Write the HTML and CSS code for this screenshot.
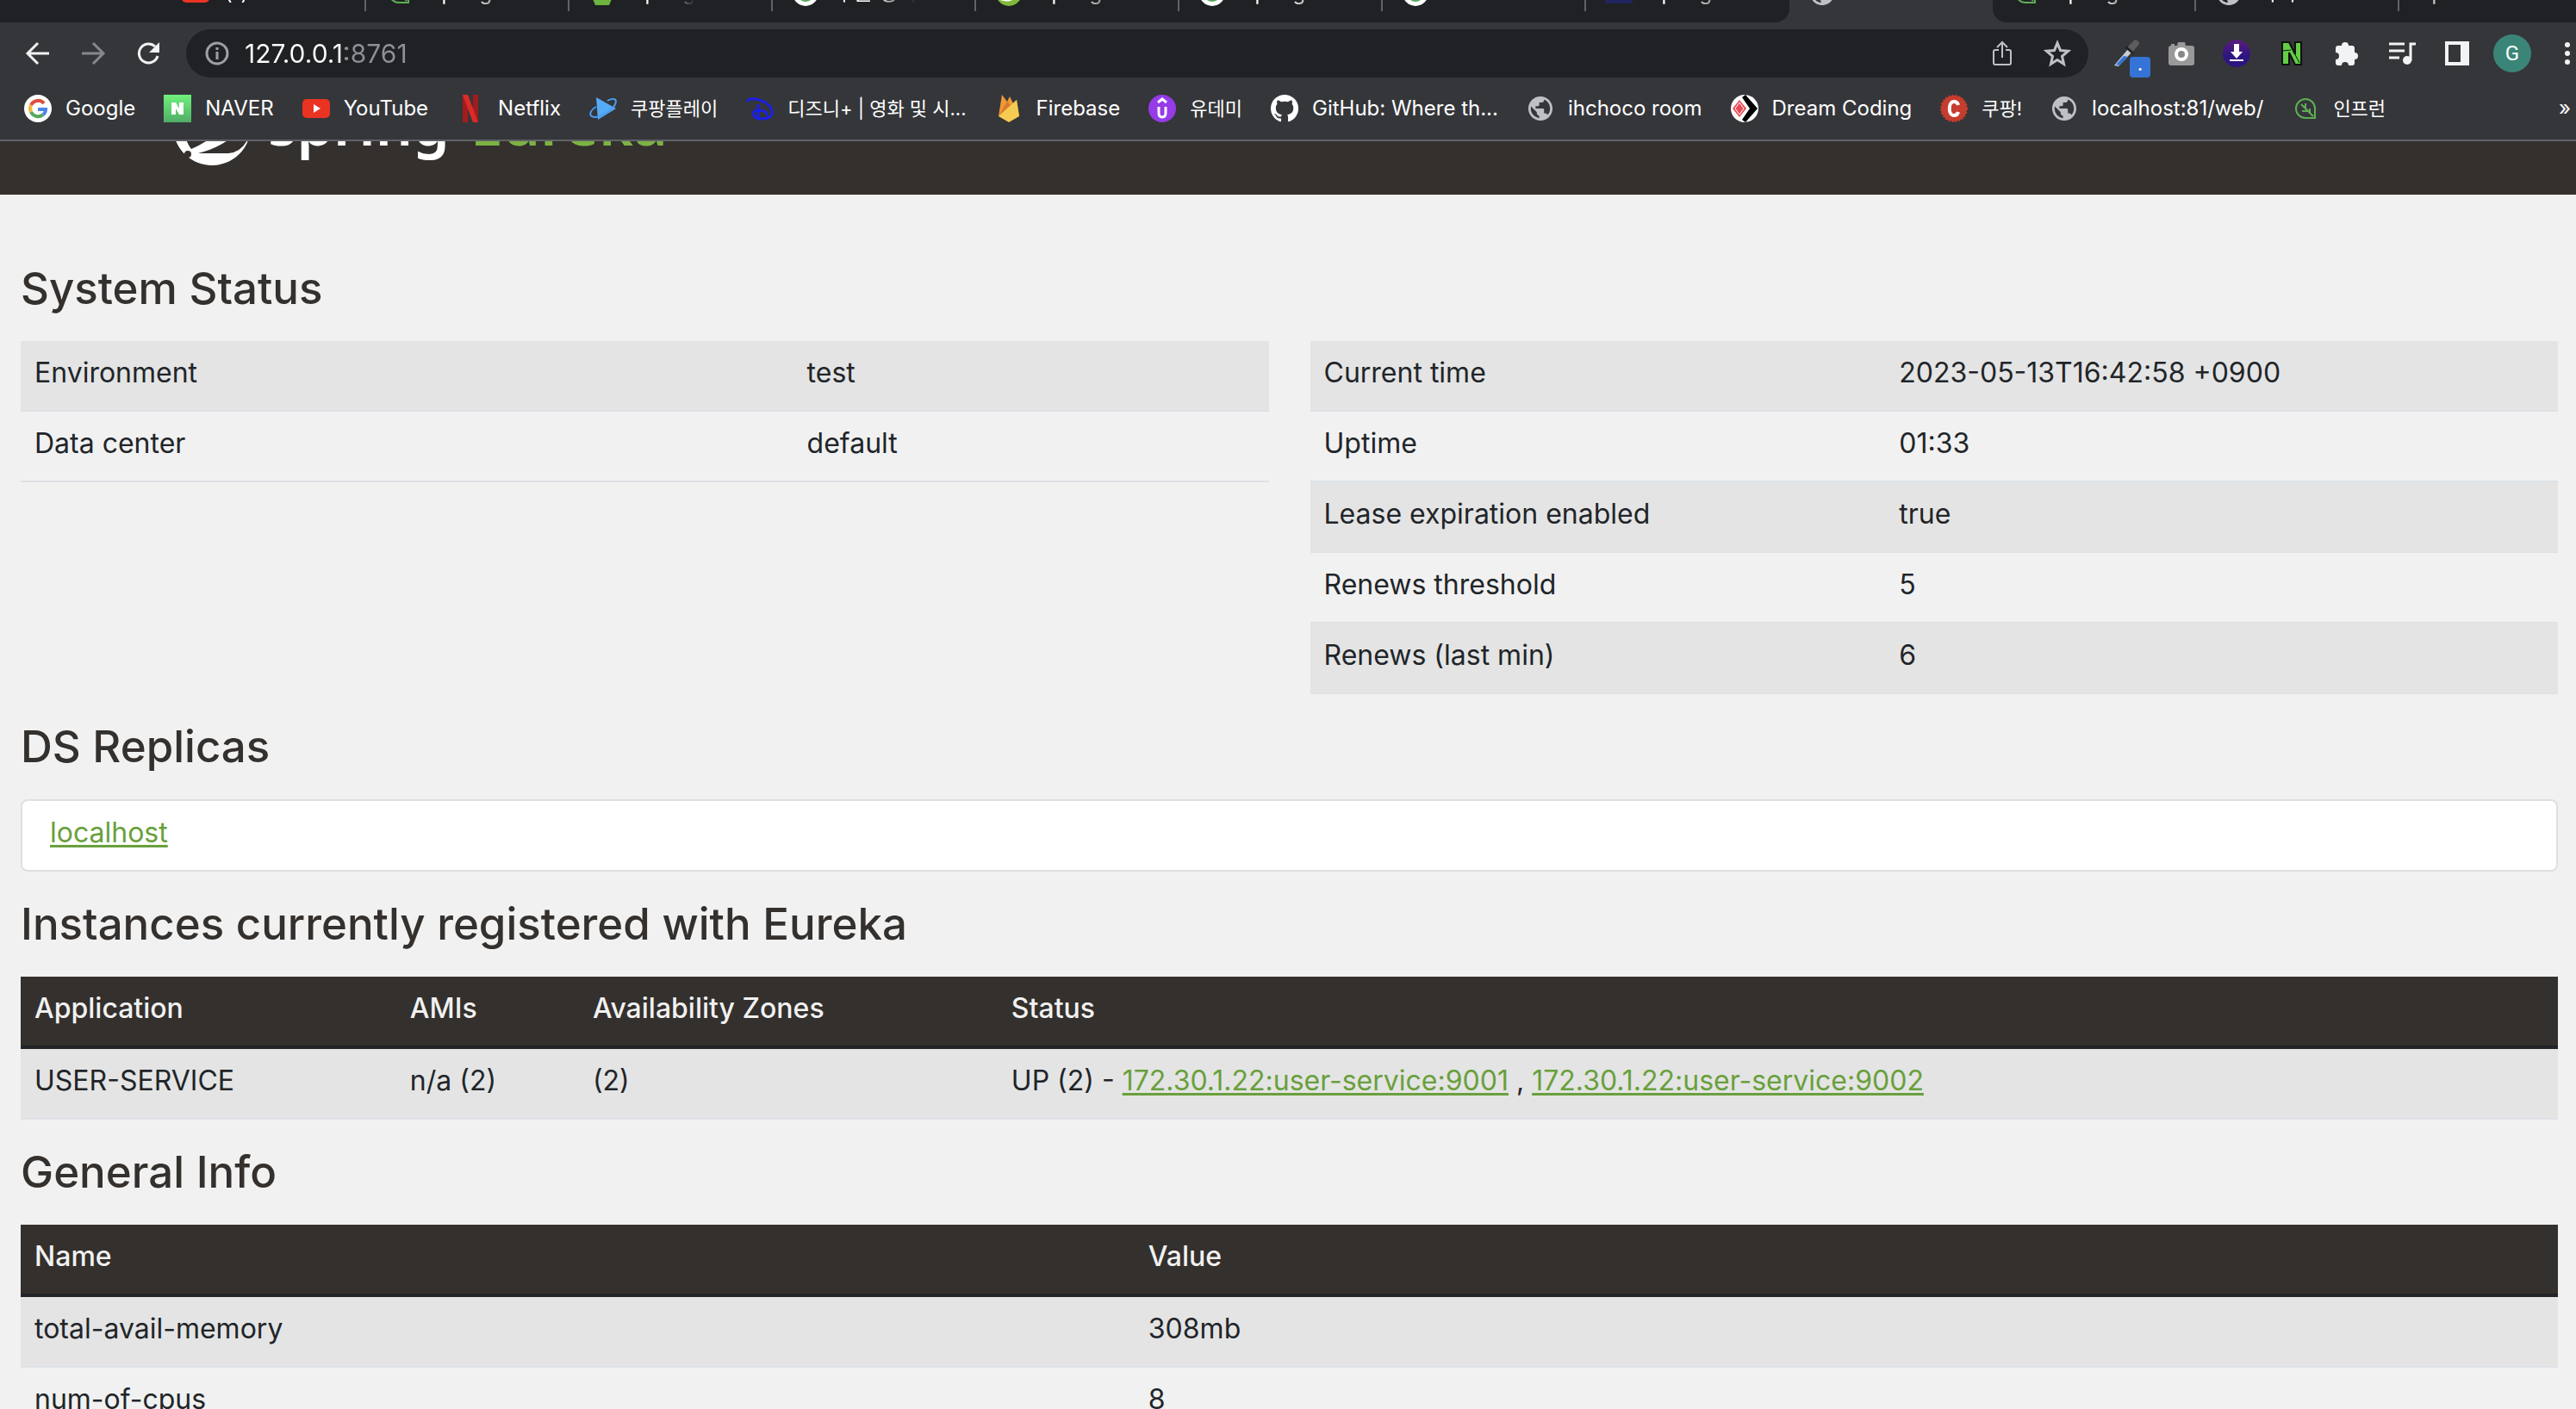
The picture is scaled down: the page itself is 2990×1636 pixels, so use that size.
FILE: index.html
```html
<!DOCTYPE html>
<html lang="en">
<head>
<meta charset="utf-8">
<title>Eureka</title>
<link rel="stylesheet" href="styles.css">
</head>
<body>
<svg class="defs" width="0" height="0" aria-hidden="true">
  <symbol id="globe" viewBox="0.6 0.6 22.8 22.8">
    <path fill="#bdc1c6" d="M12 2C6.480 2 2 6.480 2 12s4.480 10 10 10 10-4.480 10-10S17.520 2 12 2zm-1 17.930c-3.950-.49-7-3.850-7-7.930 0-.62.080-1.210.210-1.790L9 15v1c0 1.100.9 2 2 2v1.930zm6.900-2.540c-.26-.81-1-1.390-1.900-1.390h-1v-3c0-.55-.45-1-1-1H8v-2h2c.55 0 1-.45 1-1V7h2c1.100 0 2-.9 2-2v-.41c2.930 1.190 5 4.060 5 7.410 0 2.080-.8 3.970-2.100 5.390z"/>
  </symbol>
  <symbol id="leaf" viewBox="0 0 32 32">
    <path d="M27 27H16A11 11 0 1 1 27 16zM25 25 11 11M16 16V10M19 19h-7M21 21v-5" fill="none" stroke="#5fad56" stroke-width="2"/>
  </symbol>
  <symbol id="ring" viewBox="0 0 32 32">
    <circle cx="16" cy="16" r="15" fill="#fff"/><circle cx="16" cy="16" r="10" fill="#5aa85e"/>
  </symbol>
  <symbol id="youtube" viewBox="0 0 32 32">
    <rect y="5" width="32" height="22" rx="5" fill="#ea3323"/><path d="M13 11v10l8-5z" fill="#fff"/>
  </symbol>
</svg>

<div class="browser">
  <nav class="tabs" aria-label="Tabs">
    <span class="tabs-start"></span>
    <a class="tab" href="#"><svg class="icon"><use href="#youtube"/></svg><span class="tab-title">(1) 프로그</span></a>
    <a class="tab" href="#"><svg class="icon"><use href="#leaf"/></svg><span class="tab-title">Spring Cl</span></a>
    <a class="tab" href="#"><svg class="icon" viewBox="0 0 32 32"><path d="M8 2h16l6 14-6 14H8L2 16z" fill="#6db33f"/><path d="M8 22c10 4 16 0 16-12-4 6-16 2-16 12z" fill="#fff"/></svg><span class="tab-title">Spring</span></a>
    <a class="tab" href="#"><svg class="icon"><use href="#ring"/></svg><span class="tab-title">구글 영어</span></a>
    <a class="tab" href="#"><svg class="icon" viewBox="0 0 32 32"><circle cx="16" cy="16" r="15" fill="#80b93c"/><path d="M6 24c12 4 20 0 20-14-4 8-18 4-20 14z" fill="#fff"/></svg><span class="tab-title">Spring B</span></a>
    <a class="tab" href="#"><svg class="icon"><use href="#ring"/></svg><span class="tab-title">Spring bo</span></a>
    <a class="tab" href="#"><svg class="icon"><use href="#ring"/></svg><span class="tab-title">Eureka in</span></a>
    <a class="tab tab-before" href="#"><svg class="icon" viewBox="0 0 32 32"><rect y="4" width="32" height="24" fill="#20245c"/></svg><span class="tab-title">Spring C</span></a>
    <a class="tab tab-active" href="#"><svg class="icon"><use href="#globe"/></svg><span class="tab-title">Eureka</span></a>
    <a class="tab tab-after" href="#"><svg class="icon"><use href="#leaf"/></svg><span class="tab-title">Spring Cl</span></a>
    <a class="tab" href="#"><svg class="icon"><use href="#globe"/></svg><span class="tab-title">마이크로</span></a>
    <a class="tab tab-last" href="#"><span class="tab-title">Sp</span></a>
  </nav>

  <div class="toolbar">
    <button class="tool nav-tool" aria-label="Back"><svg class="icon" viewBox="0 0 32 32"><path d="M29 16H5M16 4 4 16l12 12" fill="none" stroke="#f1f3f4" stroke-width="3"/></svg></button>
    <button class="tool nav-tool" aria-label="Forward"><svg class="icon" viewBox="0 0 32 32"><path d="M3 16h24M16 4l12 12-12 12" fill="none" stroke="#86878a" stroke-width="3"/></svg></button>
    <button class="tool nav-tool" aria-label="Reload"><svg class="icon" viewBox="0 0 32 32"><path d="M27 19a11 11 0 1 1-3-11" fill="none" stroke="#f1f3f4" stroke-width="3"/><path d="M29 3v12H17z" fill="#f1f3f4"/></svg></button>
    <div class="omnibox">
      <svg class="icon" viewBox="0 0 32 32" fill="none" stroke="#9aa0a6" stroke-width="3"><circle cx="16" cy="16" r="12"/><path d="M16 14v9M16 9v3"/></svg>
      <input class="address" type="text" aria-label="Address" value="127.0.0.1:8761">
      <button class="tool" aria-label="Share"><svg class="icon" viewBox="0 0 32 32" fill="none" stroke="#bdc1c6" stroke-width="2"><path d="M12 12H8q-2 0-2 2v13q0 2 2 2h16q2 0 2-2V14q0-2-2-2h-4M16 21V4M10 9l6-6 6 6"/></svg></button>
      <button class="tool" aria-label="Bookmark this tab"><svg class="icon" viewBox="0 0 32 32" fill="none" stroke="#bdc1c6" stroke-width="3"><path d="m16 4 3.500 8.500 9 .8-7 6 2 9-7.500-4.800-7.500 4.800 2-9-7-6 9-.8z"/></svg></button>
    </div>
    <div class="extensions">
      <button class="tool picker" aria-label="Color picker"><svg class="icon" viewBox="0 0 32 32"><path d="M2 30 18 11l4 4L7 31z" fill="#c3cdd6"/><path d="m4 29 9-10 5 1-10 10z" fill="#3574d6"/><path d="m17 9 6 6 8-10q0-4-5-5z" fill="#5d5d5d"/><path d="m15 8 9 8" stroke="#242424" stroke-width="3"/></svg><span class="badge">.</span></button>
      <button class="tool" aria-label="Screenshot"><svg class="icon" viewBox="0 0 32 32"><path d="M4 7V5h4v2h3l1-4h8l1 4h7q3 0 3 3v17q0 3-3 3H4q-3 0-3-3V10q0-3 3-3z" fill="#999"/><circle cx="16" cy="17" r="6" fill="#888" stroke="#fff" stroke-width="4"/></svg></button>
      <button class="tool" aria-label="Downloader"><svg class="icon" viewBox="0 0 32 32"><defs><linearGradient id="dl" x2="0" y2="1"><stop stop-color="#5b1d7c"/><stop offset=".6" stop-color="#2d1580"/></linearGradient></defs><circle cx="16" cy="16" r="16" fill="url(#dl)"/><path d="M13 5h6v9h4l-7 8-7-8h4zM8 23h16v2H8z" fill="#fff"/></svg></button>
      <button class="tool" aria-label="N extension"><svg class="icon" viewBox="0 0 32 32"><path d="M5 3h8l7 14V3h7v26h-7l-7-14v14H5z" fill="#62cf45" stroke="#111" stroke-width="2"/><path d="m5 13 10-1M14 6l11 21" stroke="#111"/></svg></button>
      <button class="tool" aria-label="Extensions"><svg class="icon" viewBox="0 0 32 32"><path d="M10 7a4 4 0 0 1 8 0h4q3 0 3 3v5a4 4 0 0 1 0 8v4q0 3-3 3h-4a4 4 0 0 0-8 0H6q-3 0-3-3v-4a4 4 0 0 0 0-8v-5q0-3 3-3z" fill="#f1f3f4"/></svg></button>
      <button class="tool" aria-label="Media"><svg class="icon" viewBox="0 0 32 32"><path d="M1 5h18M1 13h18M1 21h12M26 25V5h6" stroke="#f1f3f4" stroke-width="3" fill="none"/><circle cx="22" cy="24" r="5" fill="#f1f3f4"/></svg></button>
      <button class="tool" aria-label="Side panel"><svg class="icon" viewBox="0 0 32 32"><path d="M2 2h28v28H2zm4 4v20h14V6z" fill="#f1f3f4" fill-rule="evenodd"/></svg></button>
      <button class="tool" aria-label="Profile"><span class="avatar">G</span></button>
      <button class="tool" aria-label="Menu"><svg class="icon" viewBox="0 0 32 32" fill="#f1f3f4"><circle cx="16" cy="6" r="3"/><circle cx="16" cy="16" r="3"/><circle cx="16" cy="26" r="3"/></svg></button>
    </div>
  </div>

  <nav class="bookmarks" aria-label="Bookmarks">
    <a class="bookmark" href="#"><svg class="icon" viewBox="0 0 32 32" fill="none" stroke-width="4"><circle cx="16" cy="16" r="16" fill="#fff"/><path d="M23 10a9 9 0 0 0-15 2" stroke="#dc4e41"/><path d="M8 12a9 9 0 0 0 0 8" stroke="#f4b63f"/><path d="M8 20a9 9 0 0 0 14 3" stroke="#57a85c"/><path d="M22 23q3-2 3-6h-9" stroke="#4d84ea"/></svg>Google</a>
    <a class="bookmark" href="#"><svg class="icon" viewBox="0 0 32 32"><defs><linearGradient id="nv" x2="0" y2="1"><stop stop-color="#70f07c"/><stop offset="1" stop-color="#50ad66"/></linearGradient></defs><path d="M0 0h32v32H0z" fill="url(#nv)"/><path d="M9 9h5l4 7V9h5v14h-5l-4-7v7H9z" fill="#fff"/></svg>NAVER</a>
    <a class="bookmark" href="#"><svg class="icon"><use href="#youtube"/></svg>YouTube</a>
    <a class="bookmark" href="#"><svg class="icon" viewBox="0 0 32 32"><path d="M7 0h6v32H7zM19 0h6v32h-6z" fill="#a31c1d"/><path d="M7 0h6l12 32h-6z" fill="#dc2b27"/></svg>Netflix</a>
    <a class="bookmark bookmark-ko" lang="ko" href="#"><svg class="icon" viewBox="0 0 32 32"><path d="m8 3 23 13L10 29z" fill="#55abf5"/><path d="M21 7c7-4 12-2 9 4-3 7-16 15-24 15-8-1-5-8 2-12" fill="none" stroke="#4a9df0" stroke-width="2"/></svg>쿠팡플레이</a>
    <a class="bookmark bookmark-ko" lang="ko" href="#"><svg class="icon" viewBox="0 0 32 32" fill="none" stroke="#1a1fe6" stroke-width="3"><path d="M1 8C4 2 20 5 28 14c8 12-6 16-16 13-5-3-6-9 3-9 6 0 11 3 8 6M14 11v18"/></svg>디즈니+ | 영화 및 시...</a>
    <a class="bookmark" href="#"><svg class="icon" viewBox="0 0 32 32"><path d="M4 25 8 0l6 8 3-6 4 8 4-4 3 19z" fill="#ed9a35"/><path d="M4 25 14 8l4 4z" fill="#d97832"/><path d="M4 25 25 6l3 19-12 7z" fill="#f6cb52"/></svg>Firebase</a>
    <a class="bookmark bookmark-ko" lang="ko" href="#"><svg class="icon" viewBox="0 0 32 32" fill="none" stroke="#fff" stroke-width="3"><circle cx="16" cy="16" r="16" fill="#963be8" stroke="none"/><path d="m11 9 5-4 5 4M12 14v7q0 5 4 5t4-5v-7"/></svg>유데미</a>
    <a class="bookmark" href="#"><svg class="icon" viewBox="0 0 16 16"><path d="M8 0a8 8 0 0 0-2.530 15.590c.4.070.55-.17.550-.38v-1.490c-2.010.37-2.530-.49-2.690-.94-.09-.23-.48-.94-.82-1.130-.28-.15-.68-.52-.01-.53.63-.01 1.080.58 1.230.82.72 1.210 1.870.87 2.330.66.070-.52.28-.87.51-1.070-1.780-.2-3.640-.89-3.640-3.950 0-.87.31-1.590.82-2.150-.08-.2-.36-1.020.08-2.120 0 0 .67-.21 2.200.82a7.600 7.600 0 0 1 4 0c1.530-1.040 2.200-.82 2.200-.82.44 1.100.16 1.920.08 2.120.51.56.82 1.270.82 2.150 0 3.070-1.870 3.750-3.650 3.950.29.25.54.73.54 1.480v2.200c0 .21.150.46.550.38A8 8 0 0 0 8 0z" fill="#fff"/></svg>GitHub: Where th...</a>
    <a class="bookmark" href="#"><svg class="icon"><use href="#globe"/></svg>ihchoco room</a>
    <a class="bookmark" href="#"><svg class="icon" viewBox="0 0 32 32"><circle cx="16" cy="16" r="16" fill="#fff"/><path d="M13 3l4-3 14 16-14 16-4-3 9-13z" fill="#000"/><path d="m10 6 8 10-8 10-8-10z" fill="#e84c55"/><path d="m10 9 5 7-5 7-5-7z" fill="none" stroke="#fff"/></svg>Dream Coding</a>
    <a class="bookmark bookmark-ko" lang="ko" href="#"><svg class="icon" viewBox="0 0 32 32"><circle cx="16" cy="16" r="15" fill="#c63c2e"/><circle cx="16" cy="16" r="15" fill="none" stroke="#c63c2e" stroke-width="2" stroke-dasharray="2"/><path d="M21 12q-1-4-5-4c-7 0-7 16 0 16q4 0 5-4" fill="none" stroke="#fff" stroke-width="4"/></svg>쿠팡!</a>
    <a class="bookmark" href="#"><svg class="icon"><use href="#globe"/></svg>localhost:81/web/</a>
    <a class="bookmark bookmark-ko" lang="ko" href="#"><svg class="icon"><use href="#leaf"/></svg>인프런</a>
    <button class="more" aria-label="More bookmarks">»</button>
  </nav>
</div>

<header class="site-header">
  <svg class="logo" viewBox="0 0 92 92"><circle cx="46" cy="46" r="45" fill="#fff"/><path d="M14 46q0 16 8 26 14-6 24-14l20-24z" fill="#34302d"/><path d="M30 77Q50 72 64 62L84 50l4 10Q80 76 65 77z" fill="#34302d"/><path d="M87 63q8-12 5-30v34z" fill="#34302d"/><circle cx="18" cy="78" r="4" fill="#34302d"/></svg>
  <span class="brand">spring</span>
  <span class="brand brand-product">Eureka</span>
</header>

<main class="content">
  <h1 class="title title-first">System Status</h1>
  <div class="status">
    <table class="table">
      <tbody>
        <tr><td class="c-env">Environment</td><td>test</td></tr>
        <tr><td>Data center</td><td>default</td></tr>
      </tbody>
    </table>
    <table class="table">
      <tbody>
        <tr><td class="c-stat">Current time</td><td>2023-05-13T16:42:58 +0900</td></tr>
        <tr><td>Uptime</td><td>01:33</td></tr>
        <tr><td>Lease expiration enabled</td><td>true</td></tr>
        <tr><td>Renews threshold</td><td>5</td></tr>
        <tr><td>Renews (last min)</td><td>6</td></tr>
      </tbody>
    </table>
  </div>

  <h1 class="title">DS Replicas</h1>
  <ul class="replicas">
    <li class="replica"><a class="link" href="#">localhost</a></li>
  </ul>

  <h1 class="title">Instances currently registered with Eureka</h1>
  <table class="table">
    <thead><tr><th class="c-app">Application</th><th class="c-ami">AMIs</th><th class="c-zone">Availability Zones</th><th>Status</th></tr></thead>
    <tbody>
      <tr><td>USER-SERVICE</td><td>n/a (2)</td><td>(2)</td><td>UP (2) - <a class="link" href="#">172.30.1.22:user-service:9001</a> , <a class="link" href="#">172.30.1.22:user-service:9002</a></td></tr>
    </tbody>
  </table>

  <h1 class="title">General Info</h1>
  <table class="table">
    <thead><tr><th class="c-name">Name</th><th>Value</th></tr></thead>
    <tbody>
      <tr><td>total-avail-memory</td><td>308mb</td></tr>
      <tr><td>num-of-cpus</td><td>8</td></tr>
    </tbody>
  </table>
</main>
</body>
</html>
```

FILE: styles.css
```css
*, *::before, *::after { box-sizing: border-box; }

html, body { height: 100%; }

body {
  margin: 0;
  overflow: hidden;
  background: #f1f1f1;
  color: #212529;
  font: 32px/48px Inter, "Noto Sans CJK KR", sans-serif;
}

.defs { position: absolute; }

.icon { flex: none; width: 32px; height: 32px; display: block; }

/* Browser window */
.browser {
  overflow: hidden;
  background: #35363a;
  border-bottom: 2px solid #5f6368;
  color: #fff;
}

.tabs { display: flex; height: 68px; margin-top: -42px; }

.tabs-start { flex: none; width: 189px; background: #202124; }

.tab {
  flex: none;
  display: flex;
  align-items: center;
  gap: 18px;
  width: 236px;
  padding: 0 22px;
  background: linear-gradient(#5f6368, #5f6368) right 15px / 2px 40px no-repeat #202124;
  color: #fff;
  font-size: 24px;
  line-height: 32px;
  text-decoration: none;
}

.tab-title {
  overflow: hidden;
  white-space: nowrap;
  -webkit-mask-image: linear-gradient(to right, #000 50%, transparent);
  mask-image: linear-gradient(to right, #000 50%, transparent);
}

.tab-before { background: #202124; border-bottom-right-radius: 16px; }
.tab-active { background: #35363a; }
.tab-after { border-bottom-left-radius: 16px; }
.tab-last { flex: 1; background: #202124; }

.toolbar { display: flex; align-items: center; height: 72px; padding-left: 12px; }

.tool {
  position: relative;
  flex: none;
  display: flex;
  align-items: center;
  justify-content: center;
  width: 64px;
  height: 56px;
  padding: 0;
  border: 0;
  background: none;
}

.omnibox {
  flex: 1;
  display: flex;
  align-items: center;
  height: 56px;
  margin: 0 12px;
  padding: 0 4px 0 20px;
  border-radius: 28px;
  background: #202124;
}

.address {
  flex: 1;
  min-width: 0;
  margin-left: 16px;
  padding: 0;
  border: 0;
  outline: 0;
  background: linear-gradient(to right, #fff 117px, #8e9094 117px);
  -webkit-background-clip: text;
  background-clip: text;
  -webkit-text-fill-color: transparent;
  color: #fff;
  font: 30px/40px Inter, sans-serif;
}

.extensions { display: flex; width: 554px; }

.badge {
  position: absolute;
  right: 4px;
  bottom: 0;
  width: 24px;
  height: 24px;
  border-radius: 4px;
  background: #3574d6;
  color: #fff;
  font: 700 18px/20px Inter, sans-serif;
}

.avatar {
  width: 44px;
  height: 44px;
  border-radius: 50%;
  background: #3b8578;
  color: #fff;
  font: 24px/44px Roboto, sans-serif;
}

.bookmarks {
  display: flex;
  align-items: center;
  gap: 33px;
  height: 64px;
  padding: 0 6px 8px 28px;
}

.bookmark {
  flex: none;
  display: flex;
  align-items: center;
  gap: 16px;
  color: #fff;
  font-size: 24px;
  line-height: 32px;
  text-decoration: none;
  white-space: nowrap;
}

.bookmark-ko { font-size: 22px; }

.more {
  margin-left: auto;
  padding: 0;
  border: 0;
  background: none;
  color: #fff;
  font: 24px/32px Inter, sans-serif;
}

/* Site header, scrolled partly under the browser bar */
.site-header {
  display: flex;
  align-items: flex-end;
  height: 62px;
  padding: 0 200px 33px;
  overflow: hidden;
  background: #34302d;
}

.logo { flex: none; width: 92px; height: 92px; }

.brand {
  margin: 0 0 14px 19px;
  color: #fff;
  font: 600 68px/72px "Noto Sans", sans-serif;
}

.brand-product { margin-left: 24px; color: #7db343; }

/* Page */
.content { padding: 0 21px 0 24px; }

.title {
  margin: 0;
  padding: 32px 0;
  color: #34302d;
  font-size: 51px;
  font-weight: 500;
  line-height: 58px;
}

.title-first { padding-top: 80px; }

.status { display: grid; grid-template-columns: 1fr 1fr; align-items: start; gap: 48px; }

.table { width: 100%; border-collapse: separate; border-spacing: 0; table-layout: fixed; }

.table th,
.table td {
  padding: 13px 16px 19px;
  border-bottom: 2px solid #dee2e6;
  text-align: left;
  vertical-align: top;
}

.table th {
  border-bottom: 4px solid #212529;
  background: #34302d;
  color: #f1f1f1;
  font-weight: 500;
}

.table tbody tr:nth-child(odd) td { background: #e4e4e4; }

.c-env { width: 61.9%; }
.c-stat { width: 46.1%; }
.c-app { width: 14.8%; }
.c-ami { width: 7.2%; }
.c-zone { width: 16.5%; }
.c-name { width: 43.9%; }

.replicas {
  margin: 0;
  padding: 0;
  border: 2px solid #dfdfdf;
  border-radius: 8px;
  background: #fff;
  list-style: none;
}

.replica { padding: 13px 32px 19px; }

.link {
  color: #69a03c;
  text-decoration-thickness: 3px;
  text-underline-offset: 3px;
}
```
